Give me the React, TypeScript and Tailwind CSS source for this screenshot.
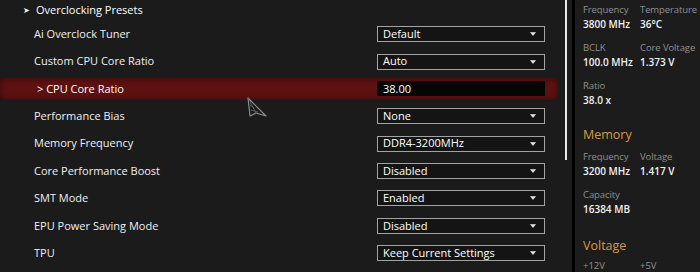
import React from 'react';

type Row = { label: string; value: string; input?: boolean };

const rows: Row[] = [
  { label: 'Ai Overclock Tuner', value: 'Default' },
  { label: 'Custom CPU Core Ratio', value: 'Auto' },
  { label: '> CPU Core Ratio', value: '38.00', input: true },
  { label: 'Performance Bias', value: 'None' },
  { label: 'Memory Frequency', value: 'DDR4-3200MHz' },
  { label: 'Core Performance Boost', value: 'Disabled' },
  { label: 'SMT Mode', value: 'Enabled' },
  { label: 'EPU Power Saving Mode', value: 'Disabled' },
  { label: 'TPU', value: 'Keep Current Settings' },
];

const Caret = () => (
  <svg width="6" height="4" viewBox="0 0 6 4" className="shrink-0">
    <path d="M0.5 0.5 L5.5 0.5 L3 3.5 Z" fill="#e6e6e6" stroke="#e6e6e6" strokeWidth="0.6" strokeLinejoin="round" />
  </svg>
);

const Cursor = () => (
  <svg width="22" height="22" viewBox="0 0 22 22" className="absolute left-[246px] top-[96px]">
    <path d="M2 2 L4 20 L10 17 L20 20 Z" fill="none" stroke="#8c8c8c" strokeWidth="1.2" strokeLinejoin="round" />
    <path d="M2 2 L10 17 M4 9 L8 12 M5 14 L12 16" stroke="#6a6a6a" strokeWidth="0.8" />
  </svg>
);

const SettingRow = ({ row }: { row: Row }) => {
  if (row.input) {
    return (
      <div className="h-[27.375px] flex items-center">
        <div className="h-[22px] w-[558px] flex items-center bg-[#5e1111] shadow-[inset_0_0_7px_rgba(0,0,0,0.5)]">
          <span className="pl-[37px] w-[377px] shrink-0 text-[11px] font-medium text-white">{row.label}</span>
          <div className="w-[168px] h-[15px] bg-[#060606] flex items-center pl-[6px] text-[11px] font-medium text-white">
            {row.value}
          </div>
        </div>
      </div>
    );
  }
  return (
    <div className="h-[27.375px] flex items-center">
      <span className="pl-[34px] w-[377px] shrink-0 text-[11px] font-medium text-[#f0f0f0]">{row.label}</span>
      <div className="w-[168px] h-[16px] border border-[#a3a3a3] bg-[#141414] flex items-center justify-between pl-[5px] pr-[8px] text-[11px] font-medium text-white">
        <span>{row.value}</span>
        <Caret />
      </div>
    </div>
  );
};

const Stat = ({ label, value }: { label: string; value: string }) => (
  <div className="flex flex-col w-[57px] whitespace-nowrap">
    <span className="text-[9.5px] leading-[14px] text-[#8f8f8f] tracking-[-0.1px]">{label}</span>
    <span className="text-[10px] leading-[14px] text-[#f2f2f2] font-semibold">{value}</span>
  </div>
);

export default function App() {
  return (
    <div
      className="w-[700px] h-[272px] overflow-hidden flex bg-[#1b1b1b] relative"
      style={{ fontFamily: '"Open Sans", "Noto Sans", sans-serif' }}
    >
      {/* Settings list */}
      <div className="w-[565px] shrink-0 flex flex-col">
        <div className="h-[20.5px] flex items-center gap-[6px] pl-[23px]">
          <span className="text-[8px] text-white leading-none">&#10148;</span>
          <span className="text-[11px] font-medium text-white">Overclocking Presets</span>
        </div>
        {rows.map((r) => (
          <SettingRow key={r.label} row={r} />
        ))}
      </div>

      {/* Scrollbar */}
      <div className="w-[7px] shrink-0 flex flex-col">
        <div className="w-[2px] h-[160px] bg-[#e8e8e8]" />
      </div>
      <div className="w-[3px] shrink-0 bg-black" />

      {/* Hardware monitor */}
      <div className="flex-1 bg-[#1c1c1c] pl-[8px] pr-[12px] pt-[3px] flex flex-col">
        <div className="flex flex-col gap-[10px]">
          <div className="flex"><Stat label="Frequency" value="3800 MHz" /><Stat label="Temperature" value="36°C" /></div>
          <div className="flex"><Stat label="BCLK" value="100.0 MHz" /><Stat label="Core Voltage" value="1.373 V" /></div>
          <div className="flex"><Stat label="Ratio" value="38.0 x" /></div>
        </div>
        <div className="h-px bg-[#5a5a5a] mt-[10px] mb-[9px]" />
        <span className="text-[12.5px] leading-[18px] text-[#d79a41]">Memory</span>
        <div className="flex flex-col gap-[10px] mt-[6px]">
          <div className="flex"><Stat label="Frequency" value="3200 MHz" /><Stat label="Voltage" value="1.417 V" /></div>
          <div className="flex"><Stat label="Capacity" value="16384 MB" /></div>
        </div>
        <div className="h-px bg-[#5a5a5a] mt-[11px] mb-[10px]" />
        <span className="text-[12.5px] leading-[18px] text-[#d79a41]">Voltage</span>
        <div className="flex mt-[4px] whitespace-nowrap">
          <span className="w-[57px] text-[9.5px] leading-[14px] text-[#8f8f8f]">+12V</span>
          <span className="text-[9.5px] leading-[14px] text-[#8f8f8f]">+5V</span>
        </div>
      </div>

      <Cursor />
    </div>
  );
}
